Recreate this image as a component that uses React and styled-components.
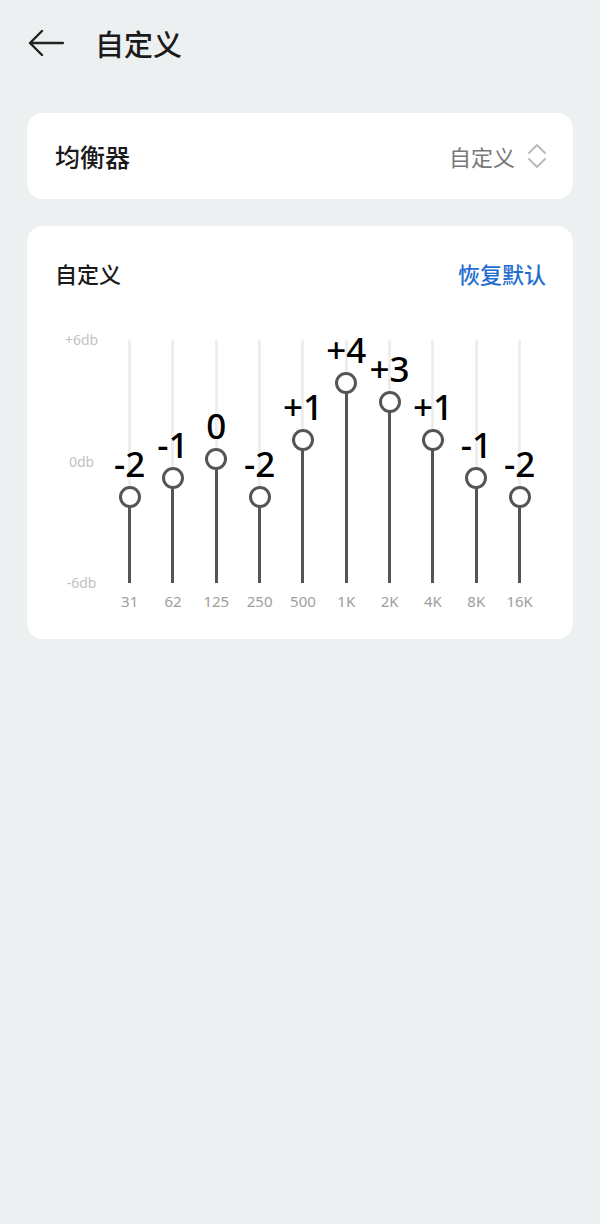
import React from "react";
import styled, { createGlobalStyle } from "styled-components";

const GlobalStyle = createGlobalStyle`
  html, body { margin: 0; padding: 0; }
  body {
    background: #edf0f1;
    font-family: "Noto Sans", "Noto Sans CJK SC", sans-serif;
    color: #111;
  }
`;

const Page = styled.div`
  min-height: 1224px;
  padding: 0 27px;
  box-sizing: border-box;
`;

const Header = styled.header`
  height: 86px;
  display: flex;
  align-items: center;
  margin-bottom: 27px;
`;

const BackButton = styled.button`
  width: 40px;
  height: 40px;
  margin-left: 1px;
  padding: 0;
  border: 0;
  background: transparent;
  display: flex;
  align-items: center;
  justify-content: flex-start;
`;

const Title = styled.h1`
  margin: 0 0 0 27px;
  font-family: "Noto Sans CJK SC", sans-serif;
  font-size: 29px;
  font-weight: 500;
  color: #1a1a1a;
  line-height: 1;
`;

const Card = styled.section`
  background: #ffffff;
  border-radius: 16px;
  margin-bottom: 27px;
`;

const SelectRow = styled(Card)`
  height: 86px;
  padding: 0 26px 0 28px;
  display: flex;
  align-items: center;
  justify-content: space-between;
  box-sizing: border-box;
`;

const RowLabel = styled.span`
  font-family: "Noto Sans CJK SC", sans-serif;
  font-size: 25px;
  font-weight: 500;
  color: #1a1a1a;
`;

const RowValue = styled.span`
  display: flex;
  align-items: center;
  gap: 12px;
  font-family: "Noto Sans CJK SC", sans-serif;
  font-size: 22px;
  color: #777;
`;

const EqCard = styled(Card)`
  padding: 0 28px 28px;
`;

const EqHeader = styled.div`
  height: 94px;
  display: flex;
  align-items: center;
  justify-content: space-between;
  margin-bottom: 20px;
`;

const EqTitle = styled.span`
  font-family: "Noto Sans CJK SC", sans-serif;
  font-size: 22px;
  font-weight: 500;
  color: #1a1a1a;
`;

const ResetLink = styled.span`
  font-family: "Noto Sans CJK SC", sans-serif;
  font-size: 22px;
  font-weight: 500;
  color: #1f6ecf;
  margin-right: -1px;
`;

const Chart = styled.div`
  display: grid;
  grid-template-columns: 53px repeat(10, 43.33px);
  align-items: start;
`;

const Axis = styled.div`
  height: 261px;
  margin-top: -9px;
  display: flex;
  flex-direction: column;
  justify-content: space-between;
  align-items: center;
`;

const AxisLabel = styled.span`
  font-size: 14px;
  line-height: 18px;
  color: #c2c2c2;
`;

const Column = styled.div`
  display: flex;
  flex-direction: column;
  align-items: center;
`;

const Track = styled.div`
  position: relative;
  width: 3px;
  height: 243px;
  background: #eeeeee;
  border-radius: 2px;
`;

const Fill = styled.div`
  position: absolute;
  left: 0;
  bottom: 0;
  width: 3px;
  background: #555555;
`;

const Knob = styled.div`
  position: absolute;
  left: 50%;
  width: 22px;
  height: 22px;
  margin-left: -11px;
  margin-top: -11px;
  box-sizing: border-box;
  border: 3px solid #555555;
  border-radius: 50%;
  background: #ffffff;
`;

const ValueLabel = styled.span`
  position: absolute;
  left: 50%;
  transform: translateX(-50%);
  font-family: "Noto Sans", sans-serif;
  font-size: 35px;
  font-weight: 500;
  line-height: 1;
  color: #000;
  white-space: nowrap;
`;

const FreqLabel = styled.span`
  margin-top: 8px;
  font-size: 15px;
  line-height: 20px;
  color: #9e9e9e;
`;

const bands = [
  { f: "31", v: -2 },
  { f: "62", v: -1 },
  { f: "125", v: 0 },
  { f: "250", v: -2 },
  { f: "500", v: 1 },
  { f: "1K", v: 4 },
  { f: "2K", v: 3 },
  { f: "4K", v: 1 },
  { f: "8K", v: -1 },
  { f: "16K", v: -2 },
];

const TRACK_H = 243;
const ZERO = 119;
const STEP = 19;

function Band({ f, v }) {
  const center = ZERO - STEP * v;
  const label = v > 0 ? `+${v}` : `${v}`;
  return (
    <Column>
      <Track>
        <Fill style={{ height: TRACK_H - center }} />
        <ValueLabel style={{ bottom: TRACK_H - center + 16 }}>{label}</ValueLabel>
        <Knob style={{ top: center }} />
      </Track>
      <FreqLabel>{f}</FreqLabel>
    </Column>
  );
}

export default function App() {
  return (
    <>
      <GlobalStyle />
      <Page>
        <Header>
          <BackButton aria-label="back">
            <svg width="36" height="28" viewBox="0 0 36 28" fill="none">
              <path d="M2 14H35M14 2L2 14L14 26" stroke="#222" strokeWidth="2.4" strokeLinecap="round" strokeLinejoin="round" />
            </svg>
          </BackButton>
          <Title>自定义</Title>
        </Header>

        <SelectRow>
          <RowLabel>均衡器</RowLabel>
          <RowValue>
            自定义
            <svg width="20" height="28" viewBox="0 0 20 28" fill="none">
              <path d="M2 11L10 3L18 11M2 17L10 25L18 17" stroke="#bbbbbb" strokeWidth="2" strokeLinecap="round" strokeLinejoin="round" />
            </svg>
          </RowValue>
        </SelectRow>

        <EqCard>
          <EqHeader>
            <EqTitle>自定义</EqTitle>
            <ResetLink>恢复默认</ResetLink>
          </EqHeader>
          <Chart>
            <Axis>
              <AxisLabel>+6db</AxisLabel>
              <AxisLabel>0db</AxisLabel>
              <AxisLabel>-6db</AxisLabel>
            </Axis>
            {bands.map((b) => (
              <Band key={b.f} {...b} />
            ))}
          </Chart>
        </EqCard>
      </Page>
    </>
  );
}
